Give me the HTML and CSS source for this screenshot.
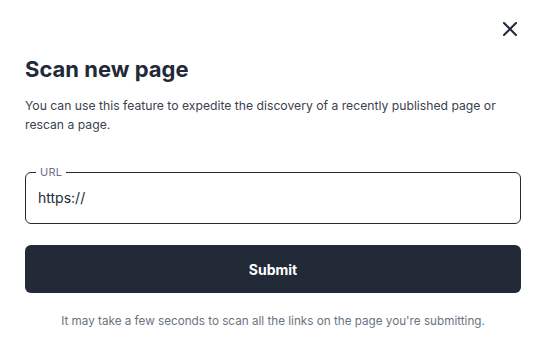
FILE: index.html
```html
<!DOCTYPE html>
<html lang="en">

<head>
  <meta charset="UTF-8">
  <meta name="viewport" content="width=device-width, initial-scale=1.0">
  <link rel="stylesheet" href="styles.css">
  <title>Scan new page</title>
</head>

<body>
  <div class="modal">
    <div class="top">
      <button class="close" aria-label="Close">
        <svg width="14" height="14" viewBox="0 0 14 14">
          <path d="M1 1L13 13M13 1L1 13" stroke="#212a36" stroke-width="2" stroke-linecap="square" />
        </svg>
      </button>
    </div>
    <h1>Scan new page</h1>
    <p class="desc">You can use this feature to expedite the discovery of a recently published page or rescan a page.</p>
    <form class="form">
      <fieldset class="field">
        <legend>URL</legend>
        <input type="text" value="https://">
      </fieldset>
      <button class="submit" type="button">Submit</button>
    </form>
    <p class="note">It may take a few seconds to scan all the links on the page you're submitting.</p>
  </div>
</body>

</html>
```

FILE: styles.css
```css
html {
  height: 100%;
}

body {
  margin: 0;
  height: 100%;
  background-color: #fff;
  font-family: "Inter", "Noto Sans", sans-serif;
  color: #212a36;
}

.modal {
  padding: 21px 27px 0 25px;
}

.top {
  display: flex;
  justify-content: flex-end;
  padding-right: 3px;
}

.close {
  border: none;
  background: none;
  padding: 1px;
  display: flex;
}

h1 {
  margin: 17px 0 0;
  font-size: 22px;
  font-weight: 700;
  line-height: 30px;
}

.desc {
  margin: 12px 0 0;
  font-size: 12.2px;
  line-height: 19px;
  color: #3a424d;
}

.form {
  margin-top: 32px;
}

.field {
  margin: 0;
  padding: 0 12px;
  border: 1px solid #212a36;
  border-radius: 6px;
  height: 58px;
  box-sizing: border-box;
}

.field legend {
  padding: 0 4px;
  margin-left: -2px;
  font-size: 11px;
  letter-spacing: 0.3px;
  color: #6a7381;
  line-height: 12px;
}

.field input {
  border: none;
  outline: none;
  padding: 0;
  margin-top: 11px;
  width: 100%;
  font-family: inherit;
  font-size: 14px;
  color: #212a36;
}

.submit {
  display: block;
  margin-top: 21px;
  width: 100%;
  height: 48px;
  border: none;
  border-radius: 6px;
  background-color: #212a36;
  color: #fff;
  font-family: inherit;
  font-size: 14px;
  font-weight: 700;
}

.note {
  margin: 21px 0 0;
  text-align: center;
  font-size: 11.7px;
  color: #6a7381;
}
```
